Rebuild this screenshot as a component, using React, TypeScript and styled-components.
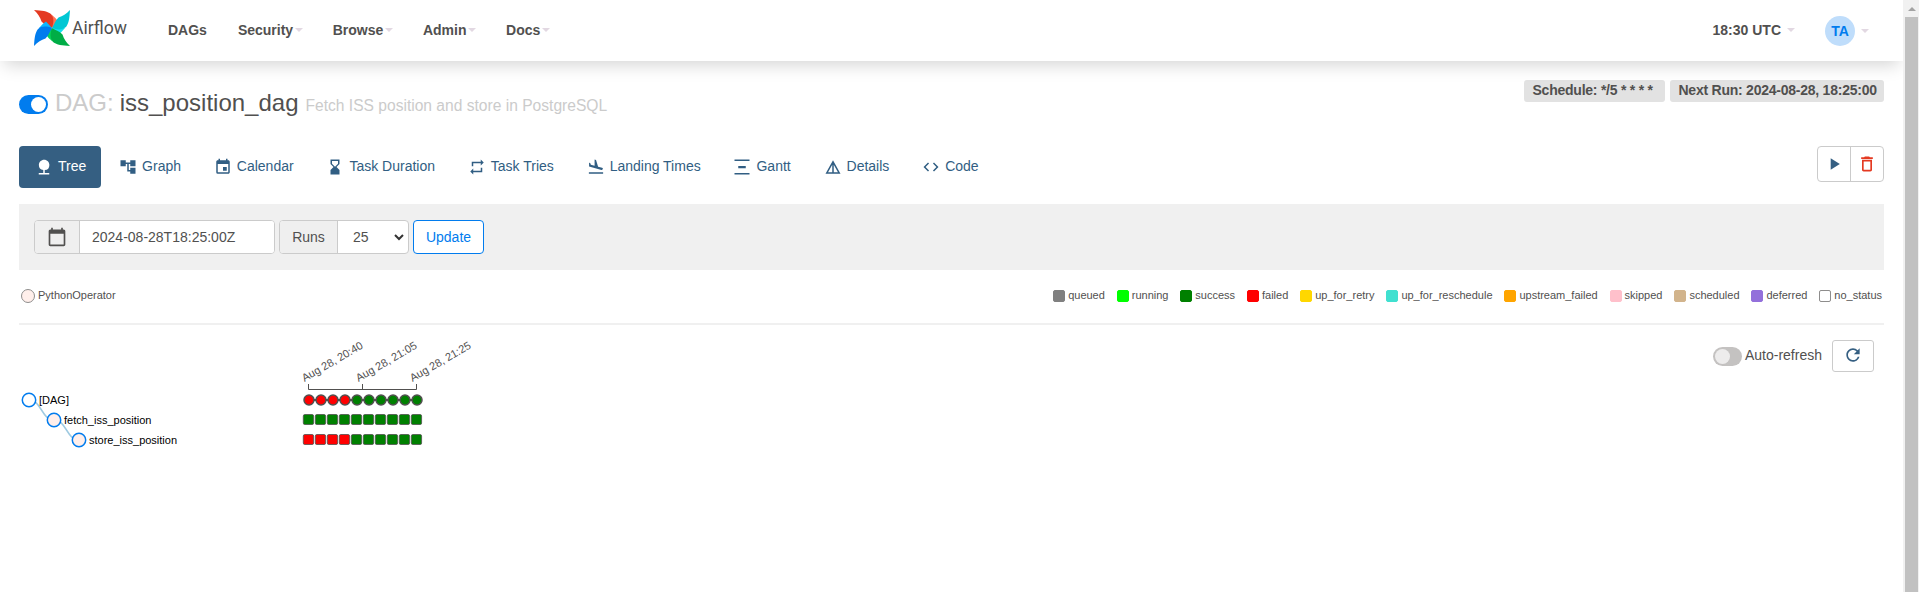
import React from 'react';
import styled, { createGlobalStyle } from 'styled-components';
import {
  MdNature, MdAccountTree, MdEvent, MdHourglassBottom, MdRepeat, MdFlightLand, MdVerticalDistribute,
  MdDetails, MdCode, MdPlayArrow, MdDeleteOutline, MdRefresh, MdCalendarToday,
} from 'react-icons/md';

const Global = createGlobalStyle`
  * { box-sizing: border-box; }
  body { margin: 0; overflow: hidden; background: #fff; color: #51504f;
    font: 14px/20px "Liberation Sans", Arial, sans-serif; }
  button, input, select { font: inherit; color: inherit; }
`;

const Page = styled.div`display: flex; height: 592px;`;
const Content = styled.div`flex: 1; min-width: 0; height: 592px; overflow: hidden;`;

const Scrollbar = styled.div`
  width: 16px; background: #f1f1f1; padding: 7px 1px 0 2px;
  display: flex; flex-direction: column; align-items: center; gap: 6px;
`;
const ScrollArrow = styled.div`
  border: 4px solid transparent; border-top: 0; border-bottom-color: #a3a3a3;
`;
const Thumb = styled.div`flex: 1; width: 100%; background: #c1c1c1;`;

const Header = styled.header`
  display: flex; align-items: center; height: 61px; padding: 0 34px; background: #fff;
  box-shadow: 0 8px 16px -4px rgba(0, 0, 0, 0.17); position: relative;
`;
const Brand = styled.div`
  display: flex; align-items: center; width: 134px;
  svg { margin-bottom: 5px; }
`;
const BrandName = styled.span`
  font: 17.600px/20px Roboto, sans-serif; margin: -5px 0 0 2px;
`;
const Nav = styled.nav`display: flex; gap: 29.600px; flex: 1; padding-bottom: 2px;`;
const NavItem = styled.span<{ $gap?: number }>`
  display: flex; align-items: center; gap: ${p => p.$gap ?? 2}px; font-weight: bold;
  &:first-child { margin-right: 1.400px; }
`;
const Clock = styled(NavItem)`padding-bottom: 2px;`;
const Caret = styled.i`
  border: 4px solid transparent; border-bottom: 0; border-top-color: #e2d8e2; margin-top: 1px;
`;
const Avatar = styled.span`
  width: 30px; height: 30px; border-radius: 50%; background: #bfddfb; color: #017cee;
  display: grid; place-items: center; margin-left: 30px;
`;

const Main = styled.main`padding: 19px 19px 0;`;
const TitleRow = styled.div`display: flex; justify-content: space-between; height: 66px;`;
const Title = styled.h3`
  display: flex; align-items: baseline; margin: 10px 0 0; font-weight: 400; font-size: 24px; line-height: 26px;
`;
const Muted = styled.span`color: #cbcbcb; margin-right: 6px;`;
const Description = styled.small`color: #cbcbcb; font-size: 15.6px; margin-left: 7px;`;
const Switch = styled.span<{ $on?: boolean }>`
  display: flex; justify-content: ${p => (p.$on ? 'flex-end' : 'flex-start')};
  width: 29px; height: 19px; padding: 2px; border-radius: 10px; flex: none;
  background: ${p => (p.$on ? '#017cee' : '#c4c2c1')};
  &::after { content: ''; width: 15px; height: 15px; border-radius: 50%; background: ${p => (p.$on ? '#fff' : '#edecec')}; }
`;
const TitleSwitch = styled(Switch)`align-self: flex-start; margin: 5px 7px 0 0;`;
const Badges = styled.div`display: flex; gap: 5px; height: 22px;`;
const Badge = styled.span<{ $width: number }>`
  width: ${p => p.$width}px; background: #e2e2e2; border-radius: 3px; padding-left: 8.500px;
  font-weight: bold; letter-spacing: -0.240px; line-height: 21px; white-space: pre;
`;

const TabRow = styled.div`display: flex; justify-content: space-between; height: 58px;`;
const Tabs = styled.div`display: flex; gap: 1.800px;`;
const Tab = styled.a<{ $active?: boolean }>`
  display: flex; align-items: center; gap: 5px; height: 42px; padding: 0 15px 3px 16px; border-radius: 4px;
  color: ${p => (p.$active ? '#fff' : '#315e83')}; background: ${p => (p.$active ? '#355f82' : 'none')};
  svg { width: 18px; height: 18px; margin-top: 3px; }
`;
const ButtonGroup = styled.div`
  display: flex; width: 67px; height: 36px; border: 1px solid #cbcbcb; border-radius: 4px;
`;
const GroupButton = styled.button<{ $danger?: boolean }>`
  flex: 1; display: grid; place-items: center; background: none; padding: 0; border: 0;
  color: ${p => (p.$danger ? '#e43921' : '#355f82')};
  & + & { border-left: 1px solid #cbcbcb; }
`;

const FilterBar = styled.form`
  display: flex; gap: 4px; height: 66px; padding: 16px 15px; background: #f0f0f0;
`;
const Field = styled.div`
  display: flex; height: 34px; border: 1px solid #cbcbcb; border-radius: 4px; overflow: hidden; background: #fff;
`;
const Addon = styled.span<{ $w: number }>`
  width: ${p => p.$w}px; display: grid; place-items: center; background: #efefef; border-right: 1px solid #cbcbcb;
`;
const DateInput = styled.input`width: 194px; border: 0; padding: 0 12px; outline: 0;`;
const RunsSelect = styled.div`
  width: 70px; display: flex; align-items: center; justify-content: space-between; padding: 0 4px 0 15px;
`;
const UpdateButton = styled.button`
  width: 71px; height: 34px; border: 1px solid #017cee; border-radius: 4px; background: #fff; color: #017cee; padding: 0;
`;

const Legend = styled.div`
  display: flex; justify-content: space-between; align-items: center;
  height: 55px; border-bottom: 2px solid #f0f0f0; padding: 0 2px 2px; font-size: 11px;
`;
const States = styled.div`display: flex; gap: 11.900px;`;
const LegendItem = styled.span`
  display: flex; align-items: center; gap: 3px; line-height: 14px; padding-bottom: 2px;
`;
const Operator = styled.i`
  width: 14px; height: 14px; border: 1px solid #8e8d8c; border-radius: 50%; background: #ffefeb; margin-top: 3px;
`;
const Swatch = styled.i<{ $color: string; $outline?: boolean }>`
  width: 12px; height: 12px; border-radius: 2px; background: ${p => p.$color}; margin-top: 3px;
  border: 1px solid ${p => (p.$outline ? '#8e8d8c' : p.$color)};
`;

const TreeArea = styled.section`display: flex; justify-content: space-between; padding-right: 10px;`;
const Refresh = styled.div`display: flex; align-items: center; height: 32px; margin-top: 15px;`;
const RefreshLabel = styled.span`margin: -2px 10px 0 3px;`;
const RefreshButton = styled.button`
  width: 42px; height: 32px; border: 1px solid #cbcbcb; border-radius: 3px; background: #fff; color: #355f82;
  display: grid; place-items: center; padding: 0 0 2px;
`;
const TreeSvg = styled.svg`
  display: block; font-size: 11px;
  .name { fill: #000; }
  .date { fill: #51504f; }
`;

const blades = [
  { angle: 0, main: '#e43921', light: '#ff7557' },
  { angle: 90, main: '#00c7d4', light: '#11e1ee' },
  { angle: 180, main: '#00ad46', light: '#04d659' },
  { angle: 270, main: '#017cee', light: '#0cb6ff' },
];

const Pinwheel = () => (
  <svg width="36" height="36" viewBox="-18 -18 36 36">
    {blades.map(b => (
      <g key={b.angle} transform={`rotate(${b.angle})`}>
        <path fill={b.light} d="M0 0 L0 -13 Q4 -10 6.500 -6 Z" />
        <path fill={b.main} d="M-18 -18 C-10 -17.500 -5 -17 -1 -14 C2 -10 2 -6 0 0 C-4 -2.500 -8 -3.500 -10.500 -6.500 C-12 -11 -14 -14 -18 -18 Z" />
      </g>
    ))}
  </svg>
);

const menus = ['Security', 'Browse', 'Admin', 'Docs'];
const tabs = [
  ['Tree', MdNature], ['Graph', MdAccountTree], ['Calendar', MdEvent], ['Task Duration', MdHourglassBottom],
  ['Task Tries', MdRepeat], ['Landing Times', MdFlightLand], ['Gantt', MdVerticalDistribute],
  ['Details', MdDetails], ['Code', MdCode],
] as const;
const states = [
  ['queued', 'gray'], ['running', 'lime'], ['success', 'green'], ['failed', 'red'], ['up_for_retry', 'gold'],
  ['up_for_reschedule', 'turquoise'], ['upstream_failed', 'orange'], ['skipped', 'pink'], ['scheduled', 'tan'],
  ['deferred', 'mediumpurple'], ['no_status', 'white'],
];
const dates = ['Aug 28, 20:40', 'Aug 28, 21:05', 'Aug 28, 21:25'];
const runs = Array.from({ length: 10 }, (_, i) => (i < 4 ? 'red' : 'green'));
const nodes = [['[DAG]', '#fff'], ['fetch_iss_position', '#ffefeb'], ['store_iss_position', '#ffefeb']];

const Tree = () => (
  <TreeSvg width="600" height="200" viewBox="19 325 600 200">
    <path d="M29 400 C41.500 400 41.500 420 54 420 M54 420 C66.500 420 66.500 440 79 440" fill="none" stroke="#9ecae1" strokeWidth="1.5" />
    {nodes.map(([name, fill], i) => (
      <g key={name} transform={`translate(${29 + i * 25} ${400 + i * 20})`}>
        <circle r="6.7" fill={fill} stroke="#017cee" strokeWidth="1.5" />
        <text className="name" x="10" y="4">{name}</text>
      </g>
    ))}
    <path d="M308.500 384 V389.500 H416.500 V384 M362.500 384 V389.500" fill="none" stroke="#51504f" />
    {dates.map((d, i) => (
      <text key={d} className="date" transform={`translate(${304.500 + i * 54} 382) rotate(-30)`}>{d}</text>
    ))}
    <path d="M309 400 H417" stroke="#51504f" strokeWidth="2" />
    {runs.map((color, i) => (
      <g key={i} stroke="#51504f">
        <circle cx={309 + i * 12} cy="400" r="5" fill={color} strokeWidth="1.5" />
        <rect x={303.300 + i * 12} y="414.500" width="10.300" height="10" rx="1.5" fill="green" strokeWidth="0.8" />
        <rect x={303.300 + i * 12} y="434.500" width="10.300" height="10" rx="1.5" fill={color} strokeWidth="0.8" />
      </g>
    ))}
  </TreeSvg>
);

export default function App() {
  return (
    <Page>
      <Global />
      <Content>
        <Header>
          <Brand><Pinwheel /><BrandName>Airflow</BrandName></Brand>
          <Nav>
            <NavItem>DAGs</NavItem>
            {menus.map(m => <NavItem key={m}>{m}<Caret /></NavItem>)}
          </Nav>
          <Clock $gap={6}>18:30 UTC<Caret /></Clock>
          <NavItem $gap={6}><Avatar>TA</Avatar><Caret /></NavItem>
        </Header>
        <Main>
          <TitleRow>
            <Title>
              <TitleSwitch $on /><Muted>DAG:</Muted>iss_position_dag
              <Description>Fetch ISS position and store in PostgreSQL</Description>
            </Title>
            <Badges>
              <Badge $width={141}>{'Schedule: */5 * * * * '}</Badge>
              <Badge $width={214}>Next Run: 2024-08-28, 18:25:00</Badge>
            </Badges>
          </TitleRow>
          <TabRow>
            <Tabs>
              {tabs.map(([label, Icon], i) => <Tab key={label} $active={i === 0}><Icon />{label}</Tab>)}
            </Tabs>
            <ButtonGroup>
              <GroupButton><MdPlayArrow size={20} /></GroupButton>
              <GroupButton $danger><MdDeleteOutline size={20} /></GroupButton>
            </ButtonGroup>
          </TabRow>
          <FilterBar>
            <Field>
              <Addon $w={45}><MdCalendarToday size={20} /></Addon>
              <DateInput defaultValue="2024-08-28T18:25:00Z" />
            </Field>
            <Field>
              <Addon $w={58}>Runs</Addon>
              <RunsSelect>
                25
                <svg width="10" height="7" viewBox="0 0 10 7"><path d="M1 1 L5 5 L9 1" fill="none" stroke="#333" strokeWidth="2" /></svg>
              </RunsSelect>
            </Field>
            <UpdateButton type="button">Update</UpdateButton>
          </FilterBar>
          <Legend>
            <LegendItem><Operator />PythonOperator</LegendItem>
            <States>
              {states.map(([s, c]) => <LegendItem key={s}><Swatch $color={c} $outline={c === 'white'} />{s}</LegendItem>)}
            </States>
          </Legend>
          <TreeArea>
            <Tree />
            <Refresh>
              <Switch /><RefreshLabel>Auto-refresh</RefreshLabel>
              <RefreshButton><MdRefresh size={20} /></RefreshButton>
            </Refresh>
          </TreeArea>
        </Main>
      </Content>
      <Scrollbar><ScrollArrow /><Thumb /></Scrollbar>
    </Page>
  );
}
